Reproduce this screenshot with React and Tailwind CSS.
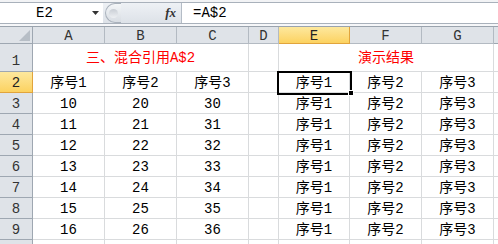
import React from 'react';

const FONT = { fontFamily: '"Liberation Mono", "Noto Sans CJK SC", monospace' };

const headCols = [
  { key: 'A', w: 'w-[72px]' },
  { key: 'B', w: 'w-[72px]' },
  { key: 'C', w: 'w-[72px]' },
  { key: 'D', w: 'w-[30px]' },
  { key: 'E', w: 'w-[71px]', active: true },
  { key: 'F', w: 'w-[72px]' },
  { key: 'G', w: 'w-[72px]' },
];

const dataRows = [3, 4, 5, 6, 7, 8, 9].map((n, i) => ({
  n,
  cells: [String(10 + i), String(20 + i), String(30 + i), '', '序号1', '序号2', '序号3'],
}));

const FormulaBar = () => (
  <div className="h-[27px] flex flex-col bg-[#eceff3]">
    <div className="h-[2px] bg-[#f2f3f5]" />
    <div className="h-[22px] flex border-t border-b border-[#a9b1bb]">
      <div className="w-[103px] bg-white flex items-center">
        <span className="ml-[36px] text-[14px] leading-none text-black">E2</span>
        <svg className="ml-auto mr-[4px]" width="7" height="4" viewBox="0 0 7 4">
          <path d="M0 0h7L3.5 4z" fill="#333" />
        </svg>
      </div>
      <div className="w-[79px] flex items-center bg-gradient-to-b from-[#eef1f5] to-[#dde2e8] border-r border-[#b4bcc6]">
        <div className="ml-[2px] w-[16px] h-[20px] rounded-l-full border-l border-t border-b border-[#aab2bc] bg-gradient-to-b from-[#f4f6f8] to-[#d8dde3] flex items-center justify-center">
          <div className="w-[9px] h-[9px] rounded-full bg-gradient-to-b from-[#c9ced5] to-[#eef0f3]" />
        </div>
        <span
          className="ml-auto mr-[5px] text-[13px] italic font-bold text-[#333]"
          style={{ fontFamily: '"Liberation Serif", serif' }}
        >
          fx
        </span>
      </div>
      <div className="flex-1 bg-white flex items-center">
        <span className="ml-[11px] text-[14px] leading-none text-black">=A$2</span>
      </div>
    </div>
    <div className="flex-1 bg-[#f6f7f9] border-b border-[#9aa3ad]" />
  </div>
);

const RowHead = ({ n, active, h = 'h-[21px]', end }) => (
  <div
    className={`w-[33px] shrink-0 ${h} flex justify-center border-r border-b ${
      end ? 'items-end pb-[3px]' : 'items-center pt-[2px]'
    } ${
      active
        ? 'bg-gradient-to-b from-[#fde89d] to-[#fcd25f] border-[#e1a43c] text-[#222]'
        : 'bg-[#dfe3e8] border-[#9ea7b1] text-[#333]'
    }`}
  >
    <span className="leading-none">{n}</span>
  </div>
);

const Cell = ({ w, children, red }) => (
  <div
    className={`${w} shrink-0 h-[21px] flex items-center justify-center pt-[2px] border-r border-b border-[#d9dbdd] ${
      red ? 'text-[#ff0000]' : 'text-black'
    }`}
  >
    <span className="leading-none whitespace-nowrap">{children}</span>
  </div>
);

export default function App() {
  return (
    <div className="w-[498px] h-[244px] overflow-hidden bg-white text-[14px]" style={FONT}>
      <FormulaBar />
      <div className="relative">
        {/* column headers */}
        <div className="flex h-[17px]">
          <div className="w-[33px] shrink-0 bg-[#dfe3e8] border-r border-b border-[#9ea7b1] flex items-end justify-end p-[2px]">
            <svg width="11" height="11" viewBox="0 0 11 11">
              <path d="M11 0v11H0z" fill="#b7bec6" />
            </svg>
          </div>
          {headCols.map(c => (
            <div
              key={c.key}
              className={`${c.w} shrink-0 flex items-center justify-center pt-[2px] border-r border-b ${
                c.active
                  ? 'bg-gradient-to-b from-[#fde89d] to-[#fcd25f] border-[#e1a43c] text-[#222]'
                  : 'bg-[#dfe3e8] border-[#b3bac2] text-[#333]'
              }`}
            >
              <span className="leading-none">{c.key}</span>
            </div>
          ))}
          <div className="flex-1 bg-[#dfe3e8] border-b border-[#9ea7b1]" />
        </div>

        {/* row 1 - merged titles */}
        <div className="flex h-[28px]">
          <RowHead n="1" h="h-[28px]" end />
          <div className="w-[216px] shrink-0 flex items-end justify-center pb-[6px] border-r border-b border-[#d9dbdd] text-[#ff0000]">
            <span className="leading-none">三、混合引用A$2</span>
          </div>
          <div className="w-[30px] shrink-0 border-r border-b border-[#d9dbdd]" />
          <div className="w-[215px] shrink-0 flex items-end justify-center pb-[6px] border-r border-b border-[#d9dbdd] text-[#ff0000]">
            <span className="leading-none">演示结果</span>
          </div>
          <div className="flex-1 border-b border-[#d9dbdd]" />
        </div>

        {/* row 2 */}
        <div className="flex">
          <RowHead n="2" active />
          <Cell w="w-[72px]">序号1</Cell>
          <Cell w="w-[72px]">序号2</Cell>
          <Cell w="w-[72px]">序号3</Cell>
          <Cell w="w-[30px]" />
          <Cell w="w-[71px]">序号1</Cell>
          <Cell w="w-[72px]">序号2</Cell>
          <Cell w="w-[72px]">序号3</Cell>
          <div className="flex-1 border-b border-[#d9dbdd]" />
        </div>

        {dataRows.map(r => (
          <div key={r.n} className="flex">
            <RowHead n={r.n} />
            {r.cells.map((v, i) => (
              <Cell key={i} w={headCols[i].w}>{v}</Cell>
            ))}
            <div className="flex-1 border-b border-[#d9dbdd]" />
          </div>
        ))}

        {/* row 10, only its top edge is in view */}
        <div className="flex h-[21px]">
          <div className="w-[33px] shrink-0 bg-[#dfe3e8] border-r border-[#9ea7b1]" />
          {headCols.map(c => (
            <div key={c.key} className={`${c.w} shrink-0 border-r border-[#d9dbdd]`} />
          ))}
        </div>

        {/* active cell E2 */}
        <div className="absolute left-[277px] top-[44px] w-[75px] h-[24px] border-2 border-black pointer-events-none" />
        <div className="absolute left-[348px] top-[63px] w-[6px] h-[6px] bg-black border border-white" />
      </div>
    </div>
  );
}
